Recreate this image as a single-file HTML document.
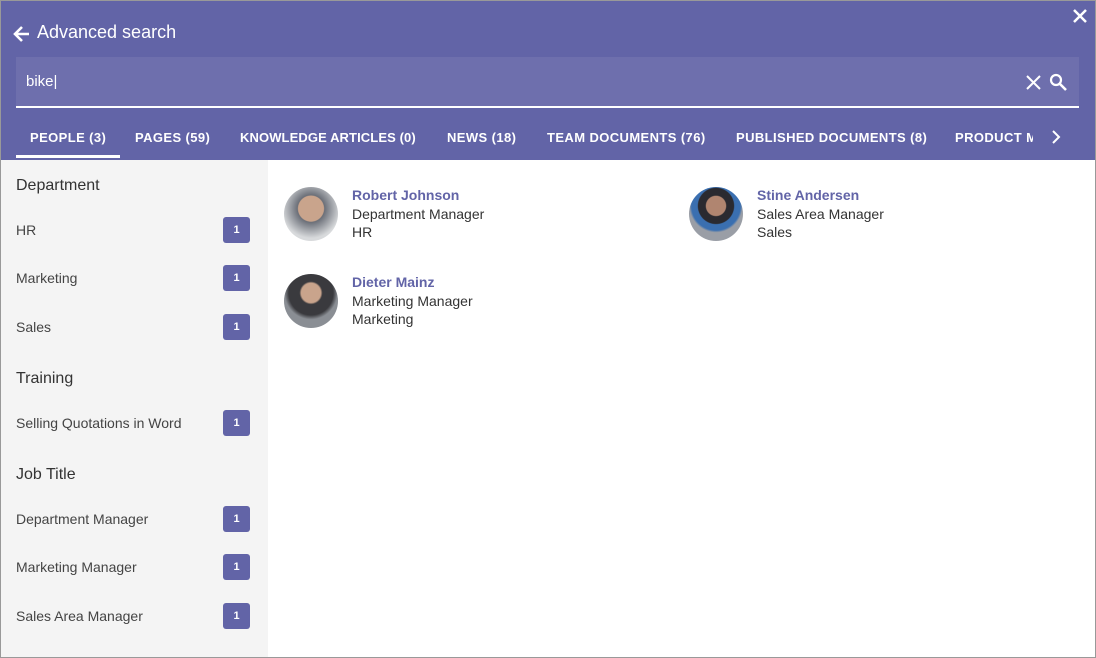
<!DOCTYPE html>
<html><head><style>
*{box-sizing:border-box;margin:0;padding:0}
body{width:1096px;height:658px;overflow:hidden;font-family:"Liberation Sans",sans-serif;background:#fff;position:relative}
.frame{position:absolute;left:0;top:0;width:1096px;height:658px;border:1px solid #999;z-index:5;pointer-events:none}
.hdr{position:absolute;left:0;top:0;width:1096px;height:160px;background:#6264a7}
.title{position:absolute;left:37px;top:22px;color:#fff;font-size:18px}
.back{position:absolute;left:12px;top:24px}
.sb{position:absolute;left:16px;top:57px;width:1063px;height:51px;background:#6e6fad;border-bottom:2px solid #fff}
.sb span{position:absolute;left:10px;top:16px;color:#fff;font-size:15px}
.tabs{position:absolute;top:130px;left:0;color:#fff;font-size:13px;font-weight:bold;letter-spacing:.4px;white-space:nowrap}
.tabs span{position:absolute;top:0}
.ul{position:absolute;left:16px;top:155px;width:104px;height:3px;background:#fff}
.side{position:absolute;left:1px;top:160px;width:267px;height:497px;background:#f4f4f4}
.h{position:absolute;left:15px;font-size:16px;color:#333}
.it{position:absolute;left:15px;font-size:14px;color:#444}
.bd{position:absolute;left:222px;width:27px;height:26px;background:#6264a7;color:#fff;font-size:11px;font-weight:bold;text-align:center;line-height:26px;border-radius:3px}
.p{position:absolute}
.av{position:absolute;width:54px;height:54px;border-radius:50%;background:radial-gradient(circle at 50% 40%,#c9a48c 0 30%,#6b6f78 32%,#d8dadc 70%)}
.n{position:absolute;left:68px;top:0;font-size:14px;font-weight:bold;color:#6264a7;white-space:nowrap}
.l{position:absolute;left:68px;font-size:14px;color:#333;white-space:nowrap}
</style></head><body>
<div class="frame"></div>
<div class="hdr">
<svg class="back" width="20" height="20" viewBox="0 0 20 20"><path d="M17 10H4M10 3L3 10l7 7" stroke="#fff" stroke-width="2.6" fill="none"/></svg>
<div class="title">Advanced search</div>
<svg style="position:absolute;right:8px;top:8px" width="16" height="16" viewBox="0 0 16 16"><path d="M2 2l12 12M14 2L2 14" stroke="#fff" stroke-width="2.5"/></svg>
<div class="sb"><span>bike|</span>
<svg style="position:absolute;right:38px;top:18px" width="15" height="15" viewBox="0 0 15 15"><path d="M1 1l13 13M14 1L1 14" stroke="#fff" stroke-width="2"/></svg>
<svg style="position:absolute;right:12px;top:16px" width="18" height="18" viewBox="0 0 18 18"><circle cx="7" cy="7" r="5" stroke="#fff" stroke-width="2.2" fill="none"/><path d="M11 11l6 6" stroke="#fff" stroke-width="2.6"/></svg>
</div>
<div class="tabs"><span style="left:30px">PEOPLE (3)</span><span style="left:135px">PAGES (59)</span><span style="left:240px;letter-spacing:.1px">KNOWLEDGE ARTICLES (0)</span><span style="left:447px">NEWS (18)</span><span style="left:547px">TEAM DOCUMENTS (76)</span><span style="left:736px">PUBLISHED DOCUMENTS (8)</span><span style="left:955px;width:78px;overflow:hidden">PRODUCT MANAGEMENT</span></div>
<svg style="position:absolute;left:1050px;top:130px" width="12" height="14" viewBox="0 0 12 14"><path d="M3 1l6 6-6 6" stroke="#fff" stroke-width="2" fill="none"/></svg>
<div class="ul"></div>
</div>
<div class="side">
<div class="h" style="top:17px">Department</div>
<div class="it" style="top:62px">HR</div><div class="bd" style="top:57px">1</div>
<div class="it" style="top:110px">Marketing</div><div class="bd" style="top:105px">1</div>
<div class="it" style="top:159px">Sales</div><div class="bd" style="top:154px">1</div>
<div class="h" style="top:210px">Training</div>
<div class="it" style="top:255px">Selling Quotations in Word</div><div class="bd" style="top:250px">1</div>
<div class="h" style="top:306px">Job Title</div>
<div class="it" style="top:351px">Department Manager</div><div class="bd" style="top:346px">1</div>
<div class="it" style="top:399px">Marketing Manager</div><div class="bd" style="top:394px">1</div>
<div class="it" style="top:448px">Sales Area Manager</div><div class="bd" style="top:443px">1</div>
</div>
<div class="p" style="left:284px;top:187px"><div class="av"></div><div class="n">Robert Johnson</div><div class="l" style="top:19px">Department Manager</div><div class="l" style="top:37px">HR</div></div>
<div class="p" style="left:689px;top:187px"><div class="av" style="background:radial-gradient(circle at 50% 35%,#b08570 0 22%,#2a2a30 24% 40%,#3a6fb0 42% 55%,#9a9ea6 60%)"></div><div class="n">Stine Andersen</div><div class="l" style="top:19px">Sales Area Manager</div><div class="l" style="top:37px">Sales</div></div>
<div class="p" style="left:284px;top:274px"><div class="av" style="background:radial-gradient(circle at 50% 35%,#c9a48c 0 22%,#3a3a3e 26% 50%,#8a8e94 60%)"></div><div class="n">Dieter Mainz</div><div class="l" style="top:19px">Marketing Manager</div><div class="l" style="top:37px">Marketing</div></div>
</body></html>
